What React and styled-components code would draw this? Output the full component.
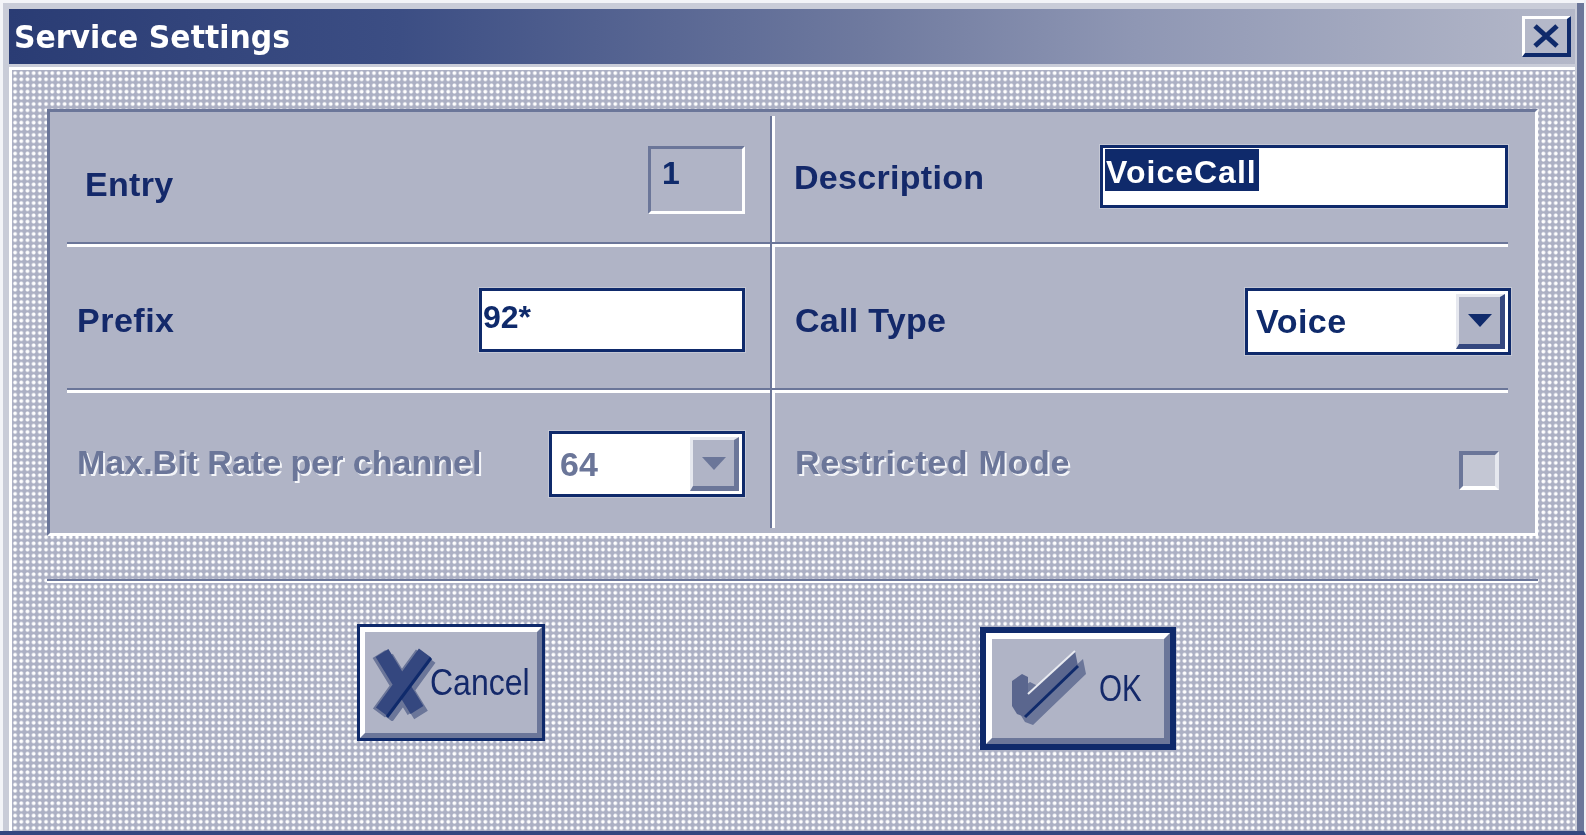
import React from "react";
import styled, { createGlobalStyle } from "styled-components";

const Global = createGlobalStyle`
  html, body { margin: 0; padding: 0; background: #b0b4c6; }
  body { width: 1586px; height: 835px; overflow: hidden; font-family: "Liberation Sans", Arial, sans-serif; }
`;

const NAVY = "#0f2a6b";
const MID = "#6b7699";
const FACE = "#b0b4c6";

const Window = styled.div`
  box-sizing: border-box;
  width: 1586px;
  height: 835px;
  background: #c9ccd8;
  padding: 9px 9px 0 9px;
  display: flex;
  flex-direction: column;
  border-right: 2px solid #eef0f5;
  border-bottom: 4px solid #34477f;
  box-shadow: inset 3px 3px 0 #f3f4f8, inset -7px 0 0 #6b7699;
  filter: blur(0.6px);
`;

const TitleBar = styled.div`
  flex: none;
  height: 55px;
  padding: 0 4px 0 5px;
  display: flex;
  align-items: center;
  justify-content: space-between;
  background: linear-gradient(90deg, #2a3c74 0%, #3c4e84 25%, #6f7a9f 55%, #8f97b4 72%, #b4b8c9 100%);
`;

const Title = styled.span`
  color: #fff;
  font: bold 32px "DejaVu Sans", sans-serif;
  transform: scaleX(0.935);
  transform-origin: left center;
`;

const CloseButton = styled.div`
  box-sizing: border-box;
  width: 49px;
  height: 41px;
  background: #b4b8c9;
  border-style: solid;
  border-width: 3px 4px 4px 3px;
  border-color: #fff ${NAVY} ${NAVY} #fff;
  display: flex;
  align-items: center;
  justify-content: center;
`;

const Body = styled.div`
  flex: 1;
  box-sizing: border-box;
  margin-top: 3px;
  border-top: 3px solid #fff;
  border-left: 3px solid #fff;
  padding: 39px 37px 0 35px;
  background-color: #acb0c4;
  background-image:
    radial-gradient(circle at 50% 50%, #fff 0, #fff 1.4px, rgba(255, 255, 255, 0) 2.3px);
  background-size: 6.2px 6.2px;
`;

const Panel = styled.div`
  box-sizing: border-box;
  height: 427px;
  background: ${FACE};
  border-style: solid;
  border-width: 3px;
  border-color: ${MID} #fff #fff ${MID};
  padding: 4px 27px 5px 17px;
  display: grid;
  grid-template-columns: 705px 1fr;
  grid-template-rows: 131px 146px 1fr;
`;

const Cell = styled.div`
  box-sizing: border-box;
  display: flex;
  align-items: center;
  justify-content: space-between;
  padding-left: ${(p) => p.$left || 0}px;
  padding-right: ${(p) => p.$right || 0}px;
  ${(p) => (p.$col === 0 ? `border-right: 2px solid ${MID}; box-shadow: 3px 0 0 #fff;` : "")}
  ${(p) =>
    p.$rule
      ? `background: linear-gradient(${MID}, ${MID}) 0 calc(100% - 3px) / 100% 2px no-repeat,
         linear-gradient(#fff, #fff) 0 100% / 100% 3px no-repeat;`
      : ""}
`;

const Label = styled.span`
  font-weight: bold;
  font-size: 34px;
  letter-spacing: ${(p) => p.$ls ?? 0.3}px;
  color: ${(p) => (p.$disabled ? MID : "#14296a")};
  white-space: nowrap;
  ${(p) => (p.$disabled ? "text-shadow: 2px 2px 0 #f4f5f8;" : "")}
  transform: translateY(${(p) => p.$dy || 0}px);
`;

const ReadOnly = styled.div`
  box-sizing: border-box;
  width: 97px;
  height: 68px;
  margin-bottom: 4px;
  padding: 6px 0 0 11px;
  font: bold 32px "Liberation Sans", sans-serif;
  color: ${NAVY};
  border-style: solid;
  border-width: 3px;
  border-color: ${MID} #fff #fff ${MID};
`;

const Input = styled.div`
  box-sizing: border-box;
  width: ${(p) => p.$w}px;
  height: ${(p) => p.$h}px;
  margin-bottom: ${(p) => p.$mb || 0}px;
  background: #fff;
  border: 3px solid ${NAVY};
  box-shadow: 0 0 0 1px #c4c7d4;
  padding: ${(p) => p.$pt}px 0 0 ${(p) => p.$pl}px;
  font: bold 32px "Liberation Sans", sans-serif;
  color: ${NAVY};
  line-height: 36px;
`;

const Selected = styled.span`
  background: ${NAVY};
  color: #fff;
  display: inline-block;
  padding: 5px 2px 0 1px;
  height: 42px;
  box-sizing: border-box;
  letter-spacing: 1px;
`;

const Select = styled.div`
  box-sizing: border-box;
  width: ${(p) => p.$w}px;
  height: ${(p) => p.$h}px;
  margin: ${(p) => p.$mt || 0}px ${(p) => p.$mr || 0}px ${(p) => p.$mb || 0}px 0;
  background: #fff;
  border: 3px solid ${NAVY};
  box-shadow: 0 0 0 1px #c4c7d4;
  padding: 3px 3px 3px 8px;
  display: flex;
  align-items: center;
  justify-content: space-between;
  font: bold 34px "Liberation Sans", sans-serif;
  letter-spacing: ${(p) => (p.$disabled ? "0" : "0.5px")};
  color: ${(p) => (p.$disabled ? MID : NAVY)};
`;

const Arrow = styled.div`
  box-sizing: border-box;
  width: 49px;
  height: 100%;
  background: ${FACE};
  border-style: solid;
  border-width: 3px 5px 5px 3px;
  border-color: #e6e8ef ${(p) => (p.$disabled ? MID : "#34477f")} ${(p) => (p.$disabled ? MID : "#34477f")} #e6e8ef;
  display: flex;
  align-items: center;
  justify-content: center;
  &::after {
    content: "";
    border-style: solid;
    border-width: 13px 12px 0 12px;
    border-color: ${(p) => (p.$disabled ? MID : NAVY)} transparent transparent transparent;
  }
`;

const Check = styled.div`
  box-sizing: border-box;
  width: 40px;
  height: 39px;
  margin-right: 9px;
  background: #c4c7d4;
  border-style: solid;
  border-width: 4px;
  border-color: ${MID} #e6e8ef #fff ${MID};
  transform: translateY(10px);
`;

const Rule = styled.div`
  height: 2px;
  margin-top: 43px;
  background: ${MID};
  border-bottom: 2px solid #fff;
`;

const Actions = styled.div`
  display: flex;
  align-items: flex-start;
  height: 190px;
`;

const Button = styled.div`
  box-sizing: border-box;
  flex: none;
  width: ${(p) => p.$w}px;
  height: ${(p) => p.$h}px;
  margin-left: ${(p) => p.$ml}px;
  margin-top: ${(p) => p.$mt}px;
  border: ${(p) => p.$b}px solid ${NAVY};
`;

const ButtonFace = styled.div`
  box-sizing: border-box;
  height: 100%;
  background: ${FACE};
  border-style: solid;
  border-width: ${(p) => p.$bevel}px;
  border-color: #fff ${MID} ${MID} #fff;
  display: flex;
  align-items: center;
  padding-left: ${(p) => p.$pl}px;
`;

const ButtonIcon = styled.svg`
  flex: none;
  margin-right: ${(p) => p.$mr}px;
`;

const ButtonText = styled.span`
  font: 37px "Liberation Sans", sans-serif;
  color: #14296a;
  display: inline-block;
  transform: scaleX(${(p) => p.$sx});
  transform-origin: left center;
`;

export default function App() {
  return (
    <>
      <Global />
      <Window>
        <TitleBar>
          <Title>Service Settings</Title>
          <CloseButton>
            <svg width="28" height="24" viewBox="0 0 28 24">
              <path d="M3 2 L25 22 M25 2 L3 22" stroke={NAVY} strokeWidth="5" fill="none" />
            </svg>
          </CloseButton>
        </TitleBar>
        <Body>
          <Panel>
            <Cell $col={0} $rule $left={18} $right={25}>
              <Label $dy={3}>Entry</Label>
              <ReadOnly>1</ReadOnly>
            </Cell>
            <Cell $rule $left={22}>
              <Label $dy={-4}>Description</Label>
              <Input $w={408} $h={63} $mb={10} $pt={1} $pl={2}>
                <Selected>VoiceCall</Selected>
              </Input>
            </Cell>
            <Cell $col={0} $rule $left={10} $right={25}>
              <Label $ls={0.5}>Prefix</Label>
              <Input $w={266} $h={64} $pt={8} $pl={1}>92*</Input>
            </Cell>
            <Cell $rule $left={23}>
              <Label>Call Type</Label>
              <Select $w={266} $h={67} $mr={-3} $mb={-2}>
                Voice
                <Arrow />
              </Select>
            </Cell>
            <Cell $col={0} $left={10} $right={25}>
              <Label $disabled $ls={0} $dy={2}>Max.Bit Rate per channel</Label>
              <Select $w={196} $h={66} $mt={7} $disabled>
                64
                <Arrow $disabled />
              </Select>
            </Cell>
            <Cell $left={23}>
              <Label $disabled $ls={0.7} $dy={2}>Restricted Mode</Label>
              <Check />
            </Cell>
          </Panel>
          <Rule />
          <Actions>
            <Button $w={188} $h={117} $b={3} $ml={310} $mt={41}>
              <ButtonFace $bevel={5} $pl={5}>
                <ButtonIcon $mr={-10} width="70" height="76" viewBox="0 0 70 76">
                  <path d="M12 8 L47 65 M55 8 L12 67" stroke={MID} strokeWidth="16" transform="translate(4 5)" fill="none" />
                  <path d="M12 8 L47 65 M55 8 L12 67" stroke={MID} strokeWidth="15" transform="translate(-3 1)" fill="none" />
                  <path d="M12 8 L47 65 M55 8 L12 67" stroke="#34477f" strokeWidth="15" fill="none" />
                  <path d="M61 13 L17 72" stroke={NAVY} strokeWidth="3" fill="none" />
                </ButtonIcon>
                <ButtonText $sx={0.865}>Cancel</ButtonText>
              </ButtonFace>
            </Button>
            <Button $w={196} $h={123} $b={6} $ml={435} $mt={44}>
              <ButtonFace $bevel={6} $pl={18}>
                <ButtonIcon $mr={9} width="80" height="80" viewBox="0 0 80 80">
                  <path d="M2 32 L12 25 L18 28 L18 45 L65 2 L68 17 L15 68 L7 65 L2 57 Z" fill={MID} transform="translate(8 8)" />
                  <path d="M2 32 L12 25 L18 28 L18 45 L65 2 L68 17 L15 68 L7 65 L2 57 Z" fill="#5a668e" />
                  <path d="M15 68 L68 17" stroke={NAVY} strokeWidth="3" fill="none" />
                  <path d="M18 45 L65 2" stroke="#e9ebf1" strokeWidth="2" fill="none" />
                </ButtonIcon>
                <ButtonText $sx={0.8}>OK</ButtonText>
              </ButtonFace>
            </Button>
          </Actions>
        </Body>
      </Window>
    </>
  );
}
